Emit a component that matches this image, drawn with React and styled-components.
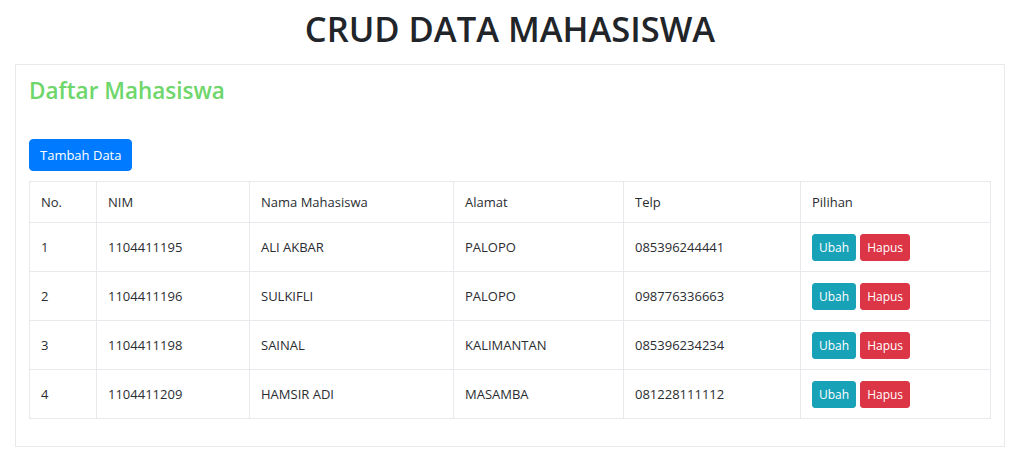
import styled, { createGlobalStyle } from "styled-components";

const GlobalStyle = createGlobalStyle`
body{
margin:0;
background:#fff;
font-family:"Open Sans", "Noto Sans", sans-serif;
color:#212529;
}
`;
const Page = styled.div`
padding:0 19px 0 15px;
`;
const Title = styled.h1`
margin:0;
padding-top:5px;
height:64px;
box-sizing:border-box;
text-align:center;
font-size:34.5px;
font-weight:600;
line-height:48px;
color:#212529;
`;
const Card = styled.div`
border:1px solid #e7e9ec;
padding:11px 13px 27px 13px;
`;
const Heading = styled.h3`
margin:0 0 33px 0;
font-size:22.5px;
font-weight:600;
line-height:30px;
color:#6ed66a;
`;
const Button = styled.button`
font-family:inherit;
border:1px solid ${p => p.bg};
background:${p => p.bg};
color:#fff;
border-radius:${p => (p.small ? "3px" : "4px")};
font-size:${p => (p.small ? "12px" : "13px")};
line-height:${p => (p.small ? "17px" : "20px")};
padding:${p => (p.small ? "4px 6px" : "5px 10px")};
cursor:pointer;
`;
const AddRow = styled.div`
margin-bottom:10px;
`;
const Table = styled.table`
width:100%;
table-layout:fixed;
border-collapse:collapse;
font-size:13px;
color:#2a2d31;
th, td{
border:1px solid #e7e9ec;
padding:0 11px;
text-align:left;
vertical-align:middle;
}
th{
font-weight:400;
height:40px;
}
td{
height:48px;
}
`;
const Col = styled.col`
width:${p => (p.w ? p.w + "px" : "auto")};
`;
const Actions = styled.div`
display:flex;
gap:4px;
`;

const columns = [
    { label: "No.", width: 67 },
    { label: "NIM", width: 153 },
    { label: "Nama Mahasiswa", width: 204 },
    { label: "Alamat", width: 170 },
    { label: "Telp", width: 177 },
    { label: "Pilihan" },
];

const rows = [
    ["1", "1104411195", "ALI AKBAR", "PALOPO", "085396244441"],
    ["2", "1104411196", "SULKIFLI", "PALOPO", "098776336663"],
    ["3", "1104411198", "SAINAL", "KALIMANTAN", "085396234234"],
    ["4", "1104411209", "HAMSIR ADI", "MASAMBA", "081228111112"],
];

export default function App() {
    return (
        <Page>
            <GlobalStyle />
            <Title>CRUD DATA MAHASISWA</Title>
            <Card>
                <Heading>Daftar Mahasiswa</Heading>
                <AddRow>
                    <Button bg="#007bff">Tambah Data</Button>
                </AddRow>
                <Table>
                    <colgroup>
                        {columns.map(c => <Col key={c.label} w={c.width} />)}
                    </colgroup>
                    <thead>
                        <tr>
                            {columns.map(c => <th key={c.label}>{c.label}</th>)}
                        </tr>
                    </thead>
                    <tbody>
                        {rows.map(r => (
                            <tr key={r[0]}>
                                {r.map((v, i) => <td key={i}>{v}</td>)}
                                <td>
                                    <Actions>
                                        <Button small bg="#17a2b8">Ubah</Button>
                                        <Button small bg="#dc3545">Hapus</Button>
                                    </Actions>
                                </td>
                            </tr>
                        ))}
                    </tbody>
                </Table>
            </Card>
        </Page>
    );
}
